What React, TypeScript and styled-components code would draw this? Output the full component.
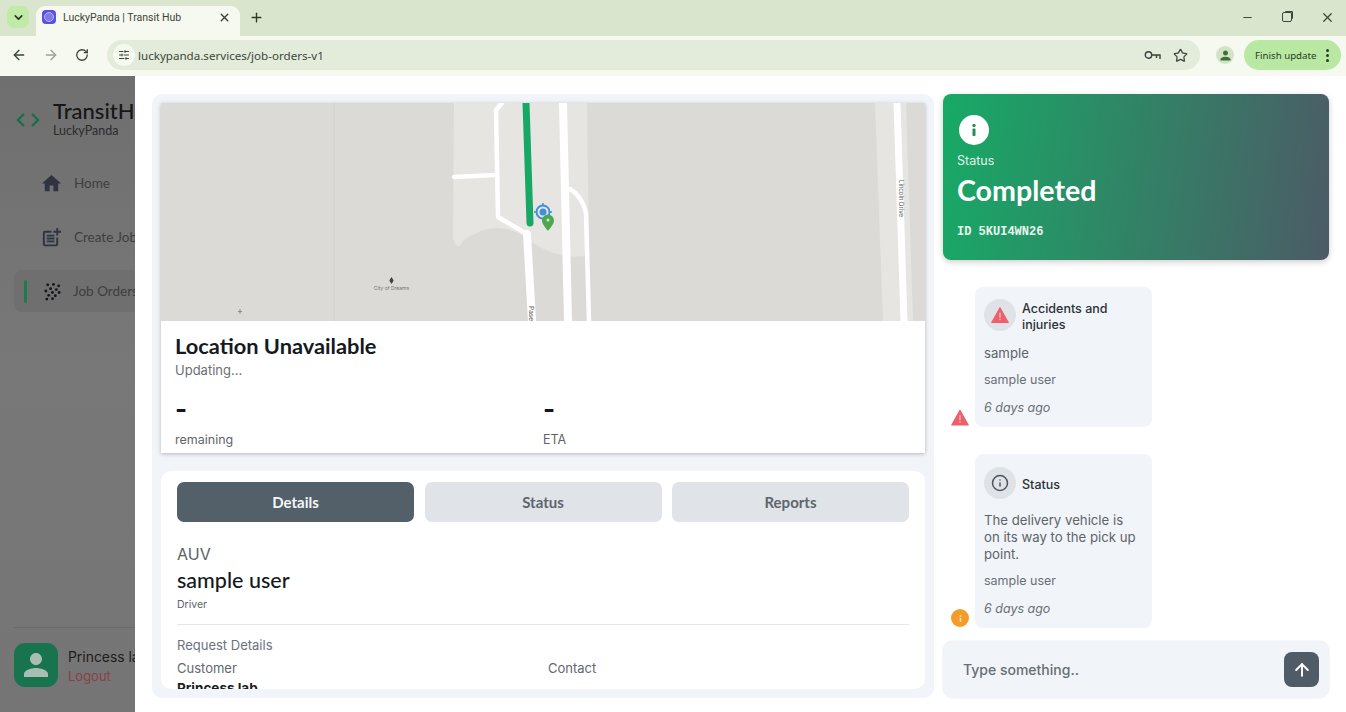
import React from 'react';
import styled, { createGlobalStyle } from 'styled-components';
import {
  ArrowLeft,
  ArrowRight,
  ArrowUp,
  ChevronDown,
  Info,
  Minus,
  Plus,
  RotateCw,
  SlidersHorizontal,
  Star,
  X,
} from 'lucide-react';
import { MdHome, MdOutlinePostAdd, MdPerson } from 'react-icons/md';

const GlobalStyle = createGlobalStyle`
  html, body { margin: 0; padding: 0; height: 100%; overflow: hidden; background: #fff; }
  * { box-sizing: border-box; }
  #root { height: 100%; }
`;

const headingFont = `Lato, "Noto Sans", sans-serif`;
const bodyFont = `Inter, "Open Sans", sans-serif`;

const Window = styled.div`
  width: 1346px;
  height: 712px;
  display: flex;
  flex-direction: column;
  font-family: ${bodyFont};
`;

/* browser chrome */
const TabStrip = styled.div`
  height: 36px;
  background: #d9e6cd;
  display: flex;
  align-items: flex-end;
  padding-left: 7px;
`;

const TabSearch = styled.div`
  width: 22px;
  height: 22px;
  margin-bottom: 8px;
  border-radius: 7px;
  background: #c1eaa9;
  color: #27361f;
  display: flex;
  align-items: center;
  justify-content: center;
`;

const Tab = styled.div`
  width: 204px;
  height: 30px;
  margin-left: 7px;
  padding: 0 9px 8px 6px;
  background: #f5f9f0;
  border-radius: 9px 9px 0 0;
  display: flex;
  align-items: center;
  color: #3c4438;
  font: 10.5px Roboto, sans-serif;
`;

const Favicon = styled.span`
  width: 14px;
  height: 14px;
  border-radius: 4px;
  background: #5b4fe0;
  display: flex;
  align-items: center;
  justify-content: center;
  margin-right: 7px;
  &::after {
    content: '';
    width: 8px;
    height: 8px;
    border-radius: 50%;
    background: #8079ee;
    border: 1.5px solid #b9b4f7;
  }
`;

const TabTitle = styled.span`
  flex: 1;
`;

const NewTab = styled.div`
  width: 32px;
  height: 30px;
  margin-bottom: 4px;
  display: flex;
  align-items: center;
  justify-content: center;
  color: #2f3a2a;
`;

const WindowControls = styled.div`
  margin-left: auto;
  height: 36px;
  display: flex;
  align-items: center;
  gap: 28px;
  padding: 0 11px 2px 0;
  color: #3d473a;
`;

const RestoreIcon = styled.span`
  width: 10px;
  height: 10px;
  border: 1.2px solid #3d473a;
  border-radius: 2px;
  box-shadow: 2px -2px 0 -1px #3d473a;
`;

const Toolbar = styled.div`
  height: 40px;
  background: #f5f9f0;
  display: flex;
  align-items: center;
  padding: 0 5px 2px 11px;
  color: #38423a;
`;

const NavButton = styled.span<{ $muted?: boolean }>`
  width: 32px;
  display: flex;
  align-items: center;
  color: ${p => (p.$muted ? '#9aa394' : '#38423a')};
`;

const Omnibox = styled.div`
  width: 1093px;
  height: 30px;
  border-radius: 15px;
  background: #e3ebdb;
  display: flex;
  align-items: center;
  padding: 0 12px 0 6px;
  font: 11.6px "Noto Sans", sans-serif;
  color: #3d463a;
`;

const SiteInfo = styled.span`
  width: 22px;
  height: 22px;
  border-radius: 50%;
  background: #f5f9f0;
  display: flex;
  align-items: center;
  justify-content: center;
  margin-right: 3px;
`;

const Url = styled.span`
  flex: 1;
`;

const OmniIcons = styled.span`
  display: flex;
  align-items: center;
  gap: 12px;
`;

const Profile = styled.span`
  width: 18px;
  height: 18px;
  margin-left: 16px;
  border-radius: 50%;
  background: #d3e4c6;
  color: #3f6e36;
  display: flex;
  align-items: center;
  justify-content: center;
`;

const UpdatePill = styled.div`
  margin-left: 10px;
  width: 97px;
  height: 30px;
  border-radius: 15px;
  background: #b8e8a2;
  display: flex;
  align-items: center;
  justify-content: space-between;
  padding: 0 12px 0 11px;
  font: 9.7px "Noto Sans", sans-serif;
  color: #2c3a26;
`;

const Kebab = styled.span`
  display: flex;
  flex-direction: column;
  gap: 2px;
  & > i {
    width: 3px;
    height: 3px;
    border-radius: 50%;
    background: #2b3a24;
  }
`;

/* page */
const Page = styled.div`
  flex: 1;
  min-height: 0;
  display: flex;
  background: #fff;
`;

const Sidebar = styled.aside`
  width: 135px;
  flex-shrink: 0;
  background: linear-gradient(180deg, #6f6f6f 0%, #787878 45%, #757575 100%);
  overflow: hidden;
  display: flex;
  flex-direction: column;
  justify-content: space-between;
  padding: 24px 0 25px 14px;
`;

const Brand = styled.div`
  width: 220px;
  display: flex;
  align-items: center;
  gap: 13px;
  padding-left: 2px;
  white-space: nowrap;
  & > svg {
    flex-shrink: 0;
  }
`;

const BrandText = styled.div`
  display: flex;
  flex-direction: column;
`;

const BrandName = styled.span`
  font: 500 22px/22px ${headingFont};
  color: #161616;
`;

const BrandSub = styled.span`
  font: 400 12.5px/18px ${headingFont};
  color: #2c2c2c;
`;

const Nav = styled.nav`
  display: flex;
  flex-direction: column;
  gap: 12px;
  margin-top: 22px;
  width: 200px;
`;

const NavItem = styled.div<{ $active?: boolean }>`
  height: 42px;
  display: flex;
  align-items: center;
  gap: 11px;
  padding-left: ${p => (p.$active ? '10px' : '26px')};
  border-radius: 8px;
  white-space: nowrap;
  background: ${p => (p.$active ? '#6f6f6f' : 'transparent')};
  font: 400 13.5px ${headingFont};
  color: #3e3e3e;
  & > svg {
    color: #2f3342;
    flex-shrink: 0;
  }
`;

const ActiveBar = styled.span`
  width: 3px;
  height: 23px;
  border-radius: 2px;
  background: #1f7a52;
  margin-right: 5px;
`;

const SidebarFoot = styled.div`
  width: 260px;
  border-top: 1px solid #6a6a6a;
  padding-top: 15px;
  display: flex;
  align-items: center;
  gap: 10px;
  white-space: nowrap;
`;

const Avatar = styled.div`
  width: 44px;
  height: 44px;
  border-radius: 11px;
  background: #17744f;
  color: #a9bdb2;
  display: flex;
  align-items: center;
  justify-content: center;
  flex-shrink: 0;
`;

const FootText = styled.div`
  display: flex;
  flex-direction: column;
  margin-top: 3px;
`;

const FootName = styled.span`
  font: 400 13.9px/20px ${bodyFont};
  color: #1d1d1d;
`;

const Logout = styled.span`
  font: 400 13px/19px ${bodyFont};
  color: #8a3f47;
`;

const Main = styled.main`
  flex: 1;
  min-width: 0;
  display: grid;
  grid-template-columns: 782px 386px;
  column-gap: 9px;
  padding: 18px 17px 14px 17px;
`;

const LeftPanel = styled.section`
  background: #f1f4f8;
  border-radius: 10px;
  padding: 9px;
  display: flex;
  flex-direction: column;
  gap: 18px;
  min-height: 0;
`;

const MapCard = styled.div`
  background: #fff;
  box-shadow: 0 1px 4px rgba(0, 0, 0, 0.25);
`;

const MapArea = styled.svg`
  display: block;
  width: 764px;
  height: 218px;
`;

const Trip = styled.div`
  height: 132px;
  padding: 13px 14px 0;
`;

const TripTitle = styled.h2`
  margin: 0;
  font: 700 21.8px/24px ${headingFont};
  color: #151a1e;
`;

const TripSub = styled.p`
  margin: 3px 0 0;
  font: 400 13px/18px ${bodyFont};
  color: #6b7076;
`;

const TripStats = styled.div`
  display: grid;
  grid-template-columns: 1fr 1fr;
  margin-top: 13px;
`;

const StatValue = styled.div`
  font: 700 26px/34px ${bodyFont};
  color: #14181b;
`;

const StatLabel = styled.div`
  margin-top: 5px;
  font: 400 12.5px/18px ${bodyFont};
  color: #5f6468;
`;

const DetailCard = styled.div`
  flex: 1;
  min-height: 0;
  background: #fff;
  border-radius: 10px;
  padding: 11px 16px 0;
  overflow: hidden;
`;

const Tabs = styled.div`
  display: grid;
  grid-template-columns: repeat(3, 237px);
  column-gap: 10.5px;
`;

const TabButton = styled.div<{ $active?: boolean }>`
  height: 40px;
  border-radius: 7px;
  display: flex;
  align-items: center;
  justify-content: center;
  font: 700 15px ${headingFont};
  background: ${p => (p.$active ? '#535f69' : '#e0e3e7')};
  color: ${p => (p.$active ? '#f4f6f7' : '#5d666d')};
`;

const Vehicle = styled.div`
  margin-top: 22px;
  font: 400 16px/20px ${bodyFont};
  color: #5a6066;
`;

const DriverName = styled.div`
  margin-top: 3px;
  font: 500 21.5px/26px ${headingFont};
  color: #15191c;
`;

const DriverRole = styled.div`
  margin-top: 5px;
  font: 400 10.5px/14px ${bodyFont};
  color: #5f6569;
`;

const Rule = styled.hr`
  margin: 12px 0 11px;
  border: 0;
  border-top: 1px solid #e4e7ea;
`;

const SectionLabel = styled.div`
  font: 400 13px/18px ${bodyFont};
  color: #6a7280;
`;

const FieldGrid = styled.div`
  margin-top: 5px;
  display: grid;
  grid-template-columns: 371px 1fr;
  font: 400 13px/18px ${bodyFont};
  color: #62686e;
`;

const FieldValue = styled.div`
  margin-top: 2px;
  font: 700 13.5px/18px ${bodyFont};
  color: #1b1f23;
`;

const RightPanel = styled.section`
  display: flex;
  flex-direction: column;
  min-height: 0;
`;

const StatusCard = styled.div`
  height: 166px;
  flex-shrink: 0;
  border-radius: 8px;
  padding: 21px 14px;
  background: linear-gradient(97deg, #17aa66 0%, #4c5b66 100%);
  box-shadow: 0 2px 6px rgba(0, 0, 0, 0.2);
  color: #fff;
`;

const StatusIcon = styled.div`
  width: 30px;
  height: 30px;
  margin-left: 2px;
  border-radius: 50%;
  background: #fff;
  display: flex;
  align-items: center;
  justify-content: center;
`;

const StatusLabel = styled.div`
  margin-top: 7px;
  font: 400 12.5px/18px ${bodyFont};
  color: #e4f3ec;
`;

const StatusValue = styled.div`
  margin-top: 3px;
  font: 700 28.6px/34px ${headingFont};
`;

const StatusId = styled.div`
  margin-top: 17px;
  font: 700 12px/16px "Liberation Mono", monospace;
  color: #e9f5ef;
`;

const Feed = styled.div`
  flex: 1;
  min-height: 0;
  display: flex;
  flex-direction: column;
  gap: 27px;
  padding: 27px 0 0 8px;
`;

const FeedRow = styled.div`
  display: flex;
  align-items: flex-end;
  gap: 6px;
`;

const FeedMark = styled.span`
  width: 18px;
  height: 18px;
  margin-bottom: 1px;
  flex-shrink: 0;
  display: flex;
  align-items: center;
  justify-content: center;
`;

const OrangeDot = styled.span`
  width: 18px;
  height: 18px;
  border-radius: 50%;
  background: #f29d2a;
  display: flex;
  align-items: center;
  justify-content: center;
`;

const Bubble = styled.article<{ $top: number }>`
  width: 177px;
  padding: ${p => p.$top}px 9px 11px;
  border-radius: 8px;
  background: #f1f4f8;
`;

const BubbleHead = styled.div<{ $gapBelow: number }>`
  display: flex;
  align-items: center;
  gap: 6px;
  margin-bottom: ${p => p.$gapBelow}px;
`;

const IconDisc = styled.span`
  width: 32px;
  height: 32px;
  flex-shrink: 0;
  border-radius: 50%;
  background: #dfe2e6;
  color: #4b5560;
  display: flex;
  align-items: center;
  justify-content: center;
`;

const BubbleTitle = styled.span`
  font: 500 12.5px/16px ${bodyFont};
  color: #2b3138;
  transform: translateY(1.5px);
`;

const BubbleText = styled.p`
  margin: 0;
  padding-right: 3px;
  font: 400 13.2px/17px ${bodyFont};
  color: #5d646b;
`;

const BubbleUser = styled.div`
  margin-top: 9px;
  font: 400 12.5px/17px ${bodyFont};
  color: #6a7076;
`;

const BubbleTime = styled.div`
  margin-top: 11px;
  font: italic 400 12.5px/17px ${bodyFont};
  color: #6a7076;
`;

const Composer = styled.div`
  height: 57px;
  flex-shrink: 0;
  display: flex;
  align-items: center;
  justify-content: space-between;
  padding: 0 10px 0 20px;
  border-radius: 10px;
  background: #f1f4f8;
  box-shadow: 0 0 2px rgba(0, 0, 0, 0.12);
  font: 500 14px ${bodyFont};
  color: #676e75;
`;

const SendButton = styled.div`
  width: 35px;
  height: 35px;
  border-radius: 8px;
  background: #4f5b66;
  color: #fff;
  display: flex;
  align-items: center;
  justify-content: center;
`;

const Triangle = ({ size }: { size: number }) => (
  <svg width={size} height={size} viewBox="0 0 24 24">
    <path d="M12 2.5 23 22H1z" fill="#ee5f6b" stroke="#ee5f6b" strokeLinejoin="round" strokeWidth="1.5" />
    <rect x="11.2" y="9" width="1.6" height="6.5" fill="#ffc9ce" />
    <rect x="11.2" y="17" width="1.6" height="1.8" fill="#ffc9ce" />
  </svg>
);

const InfoGlyph = ({ size, color }: { size: number; color: string }) => (
  <svg width={size} height={size} viewBox="0 0 16 16" fill={color}>
    <circle cx="8" cy="3.5" r="1.7" />
    <rect x="6.5" y="6.5" width="3" height="7.5" rx="0.8" />
  </svg>
);

const KeyIcon = () => (
  <svg width="17" height="12" viewBox="0 0 17 12" fill="none" stroke="#38423a" strokeWidth="1.4">
    <circle cx="4.5" cy="6" r="3.2" />
    <path d="M8 6h8V10M12.5 6v3" />
  </svg>
);

const DotsIcon = () => (
  <svg width="19" height="19" viewBox="0 0 20 20" fill="#15171c">
    {[
      [5, 3], [11, 2.5], [16.5, 4], [8, 7], [14, 8], [3, 9.5], [10, 11], [17, 11],
      [6, 14], [13, 14.5], [4, 18], [10, 17.5],
    ].map(([x, y]) => (
      <circle key={`${x}-${y}`} cx={x} cy={y} r="1.5" />
    ))}
  </svg>
);

const MapDrawing = () => (
  <MapArea viewBox="0 0 764 218">
    <rect width="764" height="218" fill="#dcdad7" />
    <path d="M173 0V218" stroke="#d0cec9" strokeWidth="1" />
    <path
      d="M293 0H426L428 152Q400 158 372 140Q345 118 320 128Q305 135 302 138Q296 150 292 135Z"
      fill="#e6e5e2"
    />
    <path d="M714 0H745L752 218H722Z" fill="#e6e5e2" />
    <g fill="none" stroke="#fff" strokeLinejoin="round" strokeLinecap="round">
      <path d="M341 0 335 7 337 114 366 131" strokeWidth="4.5" />
      <path d="M366 131 371 218" strokeWidth="8" />
      <path d="M293 74 334 72" strokeWidth="4.5" />
      <path d="M402 0 407 218" strokeWidth="8" />
      <path d="M409 86 Q421 93 425 110 L428 218" strokeWidth="4.5" />
      <path d="M736 0 743 218" strokeWidth="7" />
    </g>
    <path d="M365 0 369 120" stroke="#17a866" strokeWidth="7" strokeLinecap="round" />
    <g fill="none" stroke="#3f8fdc">
      <circle cx="382" cy="109" r="6.5" strokeWidth="2" />
      <path d="M382 100V103M382 115V118M373 109H376M388 109H391" strokeWidth="1.5" />
    </g>
    <circle cx="382" cy="109" r="3.5" fill="#3f8fdc" />
    <path d="M387 128c-3-4-6-7-6-10.5a6 6 0 0 1 12 0c0 3.5-3 6.5-6 10.5z" fill="#4ca84f" />
    <circle cx="387" cy="117" r="1.5" fill="#d8f0d8" />
    <path d="M230.5 174l2.2 3.5-2.2 3.5-2.2-3.5z" fill="#4a4136" />
    <text x="230.5" y="187" textAnchor="middle" fontFamily="Inter, sans-serif" fontSize="5" fill="#77736c">
      City of Dreams
    </text>
    <path d="M79 206v5M77 208.5h4" stroke="#8f8c85" strokeWidth="1" />
    <text
      transform="translate(368 203) rotate(90)"
      fontFamily="Inter, sans-serif"
      fontSize="6.5"
      fill="#5e5b55"
    >
      Paseo
    </text>
    <text
      transform="translate(738 77) rotate(90)"
      fontFamily="Inter, sans-serif"
      fontSize="6"
      fill="#5e5b55"
    >
      Lincoln Drive
    </text>
  </MapArea>
);

const App: React.FC = () => (
  <Window>
    <GlobalStyle />
    <TabStrip>
      <TabSearch>
        <ChevronDown size={13} strokeWidth={3} />
      </TabSearch>
      <Tab>
        <Favicon />
        <TabTitle>LuckyPanda | Transit Hub</TabTitle>
        <X size={13} strokeWidth={2.6} />
      </Tab>
      <NewTab>
        <Plus size={15} strokeWidth={2.2} />
      </NewTab>
      <WindowControls>
        <Minus size={13} />
        <RestoreIcon />
        <X size={15} />
      </WindowControls>
    </TabStrip>
    <Toolbar>
      <NavButton>
        <ArrowLeft size={16} strokeWidth={2} />
      </NavButton>
      <NavButton $muted>
        <ArrowRight size={16} strokeWidth={2} />
      </NavButton>
      <NavButton>
        <RotateCw size={14} strokeWidth={2.2} />
      </NavButton>
      <Omnibox>
        <SiteInfo>
          <SlidersHorizontal size={12} strokeWidth={2} />
        </SiteInfo>
        <Url>luckypanda.services/job-orders-v1</Url>
        <OmniIcons>
          <KeyIcon />
          <Star size={15} strokeWidth={2} />
        </OmniIcons>
      </Omnibox>
      <Profile>
        <MdPerson size={15} />
      </Profile>
      <UpdatePill>
        Finish update
        <Kebab>
          <i />
          <i />
          <i />
        </Kebab>
      </UpdatePill>
    </Toolbar>
    <Page>
      <Sidebar>
        <div>
          <Brand>
            <svg width="24" height="18" viewBox="0 0 24 18" fill="none" stroke="#1c6e4d" strokeWidth="2.4">
              <path d="M8 3 2 9l6 6M16 3l6 6-6 6" />
            </svg>
            <BrandText>
              <BrandName>TransitHub</BrandName>
              <BrandSub>LuckyPanda</BrandSub>
            </BrandText>
          </Brand>
          <Nav>
            <NavItem>
              <MdHome size={23} />
              Home
            </NavItem>
            <NavItem>
              <MdOutlinePostAdd size={23} />
              Create Job
            </NavItem>
            <NavItem $active>
              <ActiveBar />
              <DotsIcon />
              Job Orders
            </NavItem>
          </Nav>
        </div>
        <SidebarFoot>
          <Avatar>
            <MdPerson size={36} />
          </Avatar>
          <FootText>
            <FootName>Princess lab</FootName>
            <Logout>Logout</Logout>
          </FootText>
        </SidebarFoot>
      </Sidebar>
      <Main>
        <LeftPanel>
          <MapCard>
            <MapDrawing />
            <Trip>
              <TripTitle>Location Unavailable</TripTitle>
              <TripSub>Updating...</TripSub>
              <TripStats>
                <div>
                  <StatValue>-</StatValue>
                  <StatLabel>remaining</StatLabel>
                </div>
                <div>
                  <StatValue>-</StatValue>
                  <StatLabel>ETA</StatLabel>
                </div>
              </TripStats>
            </Trip>
          </MapCard>
          <DetailCard>
            <Tabs>
              <TabButton $active>Details</TabButton>
              <TabButton>Status</TabButton>
              <TabButton>Reports</TabButton>
            </Tabs>
            <Vehicle>AUV</Vehicle>
            <DriverName>sample user</DriverName>
            <DriverRole>Driver</DriverRole>
            <Rule />
            <SectionLabel>Request Details</SectionLabel>
            <FieldGrid>
              <div>
                Customer
                <FieldValue>Princess lab</FieldValue>
              </div>
              <div>Contact</div>
            </FieldGrid>
          </DetailCard>
        </LeftPanel>
        <RightPanel>
          <StatusCard>
            <StatusIcon>
              <InfoGlyph size={16} color="#2a8a63" />
            </StatusIcon>
            <StatusLabel>Status</StatusLabel>
            <StatusValue>Completed</StatusValue>
            <StatusId>ID 5KUI4WN26</StatusId>
          </StatusCard>
          <Feed>
            <FeedRow>
              <FeedMark>
                <Triangle size={19} />
              </FeedMark>
              <Bubble $top={12}>
                <BubbleHead $gapBelow={14}>
                  <IconDisc>
                    <Triangle size={18} />
                  </IconDisc>
                  <BubbleTitle>Accidents and injuries</BubbleTitle>
                </BubbleHead>
                <BubbleText>sample</BubbleText>
                <BubbleUser>sample user</BubbleUser>
                <BubbleTime>6 days ago</BubbleTime>
              </Bubble>
            </FeedRow>
            <FeedRow>
              <FeedMark>
                <OrangeDot>
                  <InfoGlyph size={9} color="#ffd9a0" />
                </OrangeDot>
              </FeedMark>
              <Bubble $top={13}>
                <BubbleHead $gapBelow={13}>
                  <IconDisc>
                    <Info size={18} />
                  </IconDisc>
                  <BubbleTitle>Status</BubbleTitle>
                </BubbleHead>
                <BubbleText>The delivery vehicle is on its way to the pick up point.</BubbleText>
                <BubbleUser>sample user</BubbleUser>
                <BubbleTime>6 days ago</BubbleTime>
              </Bubble>
            </FeedRow>
          </Feed>
          <Composer>
            Type something..
            <SendButton>
              <ArrowUp size={20} strokeWidth={2.4} />
            </SendButton>
          </Composer>
        </RightPanel>
      </Main>
    </Page>
  </Window>
);

export default App;
